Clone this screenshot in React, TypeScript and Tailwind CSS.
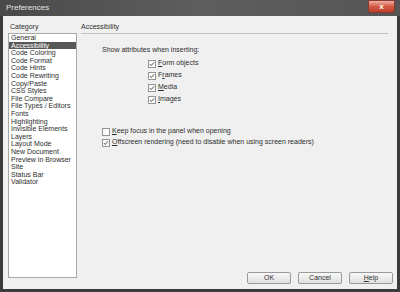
import React from "react";

const categories = [
  "General",
  "Accessibility",
  "Code Coloring",
  "Code Format",
  "Code Hints",
  "Code Rewriting",
  "Copy/Paste",
  "CSS Styles",
  "File Compare",
  "File Types / Editors",
  "Fonts",
  "Highlighting",
  "Invisible Elements",
  "Layers",
  "Layout Mode",
  "New Document",
  "Preview in Browser",
  "Site",
  "Status Bar",
  "Validator",
];

function Check({ on }: { on: boolean }) {
  return (
    <span className="w-[8px] h-[8px] border border-[#959595] bg-[#fbfbfb] flex items-center justify-center shrink-0">
      {on && (
        <svg width="6" height="6" viewBox="0 0 6 6">
          <path d="M0.8 3 L2.3 4.5 L5.2 1.2" stroke="#555" strokeWidth="1" fill="none" />
        </svg>
      )}
    </span>
  );
}

function Option({ on, u, rest, pre = "" }: { on: boolean; u: string; rest: string; pre?: string }) {
  return (
    <div className="flex items-center gap-[2px] h-[9px]">
      <Check on={on} />
      <span>
        {pre}
        <span className="underline">{u}</span>
        {rest}
      </span>
    </div>
  );
}

function Btn({ children }: { children: React.ReactNode }) {
  return (
    <div className="w-[44px] h-[12px] border border-[#9a9a9a] rounded-[2px] bg-gradient-to-b from-[#f8f8f8] to-[#e0e0e0] flex items-center justify-center text-[#333]">
      {children}
    </div>
  );
}

export default function App() {
  return (
    <div
      className="w-[400px] h-[292px] bg-[#3b3b3b] flex flex-col text-[7px] text-[#2e2e2e]"
      style={{ fontFamily: '"Liberation Sans", Arial, sans-serif' }}
    >
      {/* Title bar */}
      <div className="h-[16px] flex items-center justify-between pl-[6px] pr-[5px] bg-gradient-to-r from-[#4a4a4a] via-[#5e5e5e] to-[#555]">
        <span className="text-[8px] text-[#e4e4e4]">Preferences</span>
        <div className="self-start w-[27px] h-[13px] rounded-b-[3px] border border-[#8a3a30] bg-gradient-to-b from-[#eab0a4] via-[#d45a44] to-[#c0402c] flex items-center justify-center">
          <span className="text-[8px] font-bold text-white leading-none">x</span>
        </div>
      </div>

      {/* Body */}
      <div className="flex-1 mx-[3px] mb-[3px] bg-[#f0f0f0] flex pl-[5px]">
        {/* Category column */}
        <div className="w-[69px] flex flex-col pt-[6px] pb-[11px]">
          <div className="pl-[2px] h-[9px] leading-[9px]">Category</div>
          <div className="mt-[2px] flex-1 border border-[#a8a8a8] bg-white">
            {categories.map((c) => (
              <div
                key={c}
                className={
                  "pl-[2px] h-[7.6px] leading-[7.6px] whitespace-nowrap " +
                  (c === "Accessibility" ? "bg-[#585858] text-white" : "")
                }
              >
                {c}
              </div>
            ))}
          </div>
        </div>

        {/* Content column */}
        <div className="flex-1 flex flex-col pl-[4px] pr-[4px] pt-[6px] pb-[5px]">
          <div className="h-[9px] leading-[9px]">Accessibility</div>
          <div className="mt-[2px] mr-[5px] h-px bg-[#c0c0c0]" />
          <div className="flex-1 flex flex-col pl-[21px] pt-[11px]">
            <div className="h-[9px] leading-[9px]">Show attributes when inserting:</div>
            <div className="pl-[46px] mt-[5px] flex flex-col gap-[3px]">
              <Option on u="F" rest="orm objects" />
              <Option on pre="F" u="r" rest="ames" />
              <Option on u="M" rest="edia" />
              <Option on u="I" rest="mages" />
            </div>
            <div className="mt-[23px] flex flex-col gap-[2px]">
              <Option on={false} u="K" rest="eep focus in the panel when opening" />
              <Option on u="O" rest="ffscreen rendering (need to disable when using screen readers)" />
            </div>
          </div>
          <div className="flex justify-end gap-[7px]">
            <Btn>OK</Btn>
            <Btn>Cancel</Btn>
            <Btn>
              <span className="underline">H</span>elp
            </Btn>
          </div>
        </div>
      </div>
    </div>
  );
}
